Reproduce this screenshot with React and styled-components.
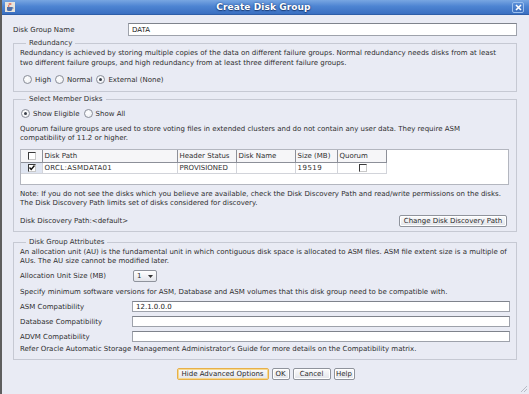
import React from "react";
import styled, { createGlobalStyle } from "styled-components";

const Global = createGlobalStyle`
  html, body { margin: 0; padding: 0; background: #e9ebf4; }
  * { box-sizing: border-box; }
`;

const Window = styled.div`
  width: 529px;
  height: 394px;
  display: flex;
  flex-direction: column;
  background: #e9ebf4;
  border-left: 2px solid #5e5e5e;
  font-family: "DejaVu Sans", sans-serif;
  font-size: 7px;
  color: #2e2e2e;
  position: relative;
  overflow: hidden;
`;

const TitleBar = styled.div`
  height: 15px;
  flex: none;
  display: flex;
  align-items: center;
  padding: 0 5px 0 3px;
  background: linear-gradient(#78a6e2, #4d84d2 45%, #3a6fc1);
  border-bottom: 1px solid #2e5ea8;
`;

const TitleText = styled.div`
  flex: 1;
  text-align: center;
  color: #fff;
  font-weight: bold;
  font-size: 9px;
  letter-spacing: 0.1px;
  text-shadow: 0 0 2px #1d3f78, 0 1px 1px #1d3f78;
`;

const CloseBox = styled.div`
  width: 12px;
  height: 11px;
  border: 1px solid #9cc0ee;
  border-radius: 2px;
  background: linear-gradient(#5a8fd8, #3c6fbf);
  display: flex;
  align-items: center;
  justify-content: center;
`;

const Body = styled.div`
  flex: 1;
  display: flex;
  flex-direction: column;
  padding: 8px 12px 0 11px;
`;

const FormRow = styled.div`
  display: grid;
  grid-template-columns: ${(p) => p.$label}px 1fr;
  align-items: center;
  height: ${(p) => p.$h || 12}px;
  margin-top: ${(p) => p.$mt || 0}px;
`;

const TextField = styled.div`
  height: 100%;
  background: #fff;
  border: 1px solid #9ea2ab;
  border-top-color: #7f838c;
  display: flex;
  align-items: center;
  padding-left: 3px;
  color: #222;
`;

const Group = styled.fieldset`
  margin: ${(p) => p.$mt}px 0 0 0;
  padding: 1px 6px ${(p) => p.$pb}px 6px;
  border: 1px solid #c6c9d3;
  min-width: 0;
`;

const Legend = styled.legend`
  font-size: 7px;
  line-height: 8px;
  padding: 0 3px;
  margin-left: 6px;
  color: #333;
`;

const Para = styled.div`
  line-height: ${(p) => p.$lh || 9}px;
  margin-top: ${(p) => p.$mt || 0}px;
  white-space: nowrap;
`;

const RadioRow = styled.div`
  display: flex;
  align-items: center;
  height: 11px;
  margin-top: ${(p) => p.$mt}px;
  padding-left: ${(p) => p.$pl}px;
  gap: 4px;
`;

const RadioItem = styled.label`
  display: flex;
  align-items: center;
  gap: 3px;
`;

const RadioCircle = styled.span`
  width: 9px;
  height: 9px;
  border-radius: 50%;
  border: 1px solid #8a8e98;
  background: radial-gradient(circle at 40% 40%, #ffffff, #e9ebf0);
  display: flex;
  align-items: center;
  justify-content: center;
  &::after {
    content: "";
    width: 3px;
    height: 3px;
    border-radius: 50%;
    background: ${(p) => (p.$on ? "#3a3f4a" : "transparent")};
  }
`;

const TableArea = styled.div`
  margin-top: ${(p) => p.$mt}px;
  width: 489px;
  height: 36px;
  background: #fff;
  border: 1px solid #b3b6bf;
`;

const Table = styled.table`
  border-collapse: collapse;
  table-layout: fixed;
  width: 365px;
  font-size: 7px;
`;

const Th = styled.th`
  height: 12px;
  padding: 0 0 0 2px;
  font-weight: normal;
  text-align: ${(p) => p.$align || "left"};
  background: #f6f6f8;
  border: 1px solid #8d9099;
  border-top: none;
  white-space: nowrap;
  overflow: hidden;
  &:first-child { border-left: none; }
`;

const Td = styled.td`
  height: 11px;
  padding: 0 0 0 2px;
  text-align: ${(p) => p.$align || "left"};
  background: ${(p) => (p.$sel ? "#dfe5f1" : "#fff")};
  border: 1px solid #d2d4da;
  border-top: none;
  white-space: nowrap;
  letter-spacing: ${(p) => (p.$ls ? p.$ls : 0)}px;
  &:first-child { border-left: none; }
`;

const Check = styled.span`
  display: inline-block;
  vertical-align: middle;
  width: 8px;
  height: 8px;
  background: #fff;
  border-top: 1px solid #3a3a3a;
  border-left: 1px solid #3a3a3a;
  border-right: 1px solid #c8c8c8;
  border-bottom: 1px solid #c8c8c8;
  position: relative;
`;

const CheckMark = styled.svg`
  position: absolute;
  left: 0;
  top: 0;
`;

const SplitRow = styled.div`
  display: flex;
  align-items: center;
  justify-content: space-between;
  height: 12px;
  margin-top: ${(p) => p.$mt}px;
  padding-right: 3px;
`;

const Button = styled.button`
  font-family: "DejaVu Sans", sans-serif;
  font-size: 7px;
  color: #2a2a2a;
  height: ${(p) => p.$h || 12}px;
  width: ${(p) => p.$w}px;
  padding: 0;
  border-radius: 2px;
  border: 1px solid ${(p) => (p.$focus ? "#e7b04a" : "#8f939c")};
  box-shadow: ${(p) =>
    p.$focus ? "inset 0 0 0 1px #f7d98e" : "inset 0 0 0 1px #ffffff"};
  background: linear-gradient(#fbfbfc, #e2e4ea);
  white-space: nowrap;
`;

const SelectBox = styled.div`
  width: 24px;
  height: 12px;
  border: 1px solid #8f939c;
  border-radius: 2px;
  background: linear-gradient(#ffffff, #e3e5eb);
  display: flex;
  align-items: center;
  justify-content: space-between;
  padding: 0 3px 0 3px;
`;

const ButtonBar = styled.div`
  display: flex;
  justify-content: center;
  gap: 3px;
  margin-top: 8px;
  padding-left: 1px;
`;

const Grip = styled.svg`
  position: absolute;
  right: 1px;
  bottom: 1px;
`;

function Radio({ on, children }) {
  return (
    <RadioItem>
      <RadioCircle $on={on} />
      <span>{children}</span>
    </RadioItem>
  );
}

function CheckBox({ on }) {
  return (
    <Check>
      {on && (
        <CheckMark width="6" height="6" viewBox="0 0 6 6">
          <path d="M0.5 2.5 L2.2 4.5 L5.5 0.5" stroke="#111" strokeWidth="1.4" fill="none" />
        </CheckMark>
      )}
    </Check>
  );
}

export default function App() {
  return (
    <>
      <Global />
      <Window>
        <TitleBar>
          <svg width="10" height="10" viewBox="0 0 10 10">
            <rect x="0" y="0" width="10" height="10" fill="#e8e4dc" />
            <path d="M2 5 h5 v2.5 a1.5 1.5 0 0 1 -1.5 1.5 h-2 a1.5 1.5 0 0 1 -1.5 -1.5z" fill="#4f6fa8" />
            <path d="M7 5.5 h1 v1.3 h-1" stroke="#4f6fa8" strokeWidth="0.7" fill="none" />
            <path d="M4 1 q1 1 0 2 q-1 1 0 2 M5.5 1 q1 1 0 2" stroke="#e0402a" strokeWidth="0.8" fill="none" />
          </svg>
          <TitleText>Create Disk Group</TitleText>
          <CloseBox>
            <svg width="7" height="7" viewBox="0 0 7 7">
              <path d="M1 1 L6 6 M6 1 L1 6" stroke="#fff" strokeWidth="1.6" />
            </svg>
          </CloseBox>
        </TitleBar>
        <Body>
          <FormRow $label={115} $h={13}>
            <span>Disk Group Name</span>
            <TextField>DATA</TextField>
          </FormRow>

          <Group $mt={3} $pb={6}>
            <Legend>Redundancy</Legend>
            <Para $lh={10}>
              Redundancy is achieved by storing multiple copies of the data on different failure groups. Normal redundancy needs disks from at least
              <br />
              two different failure groups, and high redundancy from at least three different failure groups.
            </Para>
            <RadioRow $mt={6} $pl={3}>
              <Radio>High</Radio>
              <Radio>Normal</Radio>
              <Radio on>External (None)</Radio>
            </RadioRow>
          </Group>

          <Group $mt={3} $pb={4}>
            <Legend>Select Member Disks</Legend>
            <RadioRow $mt={4} $pl={1}>
              <Radio on>Show Eligible</Radio>
              <Radio>Show All</Radio>
            </RadioRow>
            <Para $mt={6}>
              Quorum failure groups are used to store voting files in extended clusters and do not contain any user data. They require ASM
              <br />
              compatibility of 11.2 or higher.
            </Para>
            <TableArea $mt={6}>
              <Table>
                <colgroup>
                  <col style={{ width: 21 }} />
                  <col style={{ width: 135 }} />
                  <col style={{ width: 59 }} />
                  <col style={{ width: 59 }} />
                  <col style={{ width: 42 }} />
                  <col style={{ width: 49 }} />
                </colgroup>
                <thead>
                  <tr>
                    <Th $align="center"><CheckBox /></Th>
                    <Th>Disk Path</Th>
                    <Th>Header Status</Th>
                    <Th>Disk Name</Th>
                    <Th>Size (MB)</Th>
                    <Th>Quorum</Th>
                  </tr>
                </thead>
                <tbody>
                  <tr>
                    <Td $align="center" $sel><CheckBox on /></Td>
                    <Td $ls={0.3}>ORCL:ASMDATA01</Td>
                    <Td>PROVISIONED</Td>
                    <Td />
                    <Td $ls={0.5}>19519</Td>
                    <Td $align="center"><CheckBox /></Td>
                  </tr>
                </tbody>
              </Table>
            </TableArea>
            <Para $mt={5}>
              Note: If you do not see the disks which you believe are available, check the Disk Discovery Path and read/write permissions on the disks.
              <br />
              The Disk Discovery Path limits set of disks considered for discovery.
            </Para>
            <SplitRow $mt={7}>
              <span>Disk Discovery Path:&lt;default&gt;</span>
              <Button $w={108}>Change Disk Discovery Path</Button>
            </SplitRow>
          </Group>

          <Group $mt={6} $pb={5}>
            <Legend>Disk Group Attributes</Legend>
            <Para $mt={1}>
              An allocation unit (AU) is the fundamental unit in which contiguous disk space is allocated to ASM files. ASM file extent size is a multiple of
              <br />
              AUs. The AU size cannot be modified later.
            </Para>
            <FormRow $label={113} $h={12} $mt={4}>
              <span>Allocation Unit Size (MB)</span>
              <SelectBox>
                <span>1</span>
                <svg width="5" height="3" viewBox="0 0 5 3">
                  <path d="M0 0 H5 L2.5 3z" fill="#333" />
                </svg>
              </SelectBox>
            </FormRow>
            <Para $mt={6}>
              Specify minimum software versions for ASM, Database and ASM volumes that this disk group need to be compatible with.
            </Para>
            <FormRow $label={112} $h={11} $mt={4}>
              <span>ASM Compatibility</span>
              <TextField>12.1.0.0.0</TextField>
            </FormRow>
            <FormRow $label={112} $h={11} $mt={4}>
              <span>Database Compatibility</span>
              <TextField />
            </FormRow>
            <FormRow $label={112} $h={11} $mt={4}>
              <span>ADVM Compatibility</span>
              <TextField />
            </FormRow>
            <Para $mt={3}>
              Refer Oracle Automatic Storage Management Administrator's Guide for more details on the Compatibility matrix.
            </Para>
          </Group>

          <ButtonBar>
            <Button $w={92} $focus>Hide Advanced Options</Button>
            <Button $w={18}>OK</Button>
            <Button $w={38}>Cancel</Button>
            <Button $w={21}>Help</Button>
          </ButtonBar>
        </Body>
        <Grip width="8" height="8" viewBox="0 0 8 8">
          <path d="M7 1 L1 7 M7 4 L4 7" stroke="#b8bcc6" strokeWidth="1" />
        </Grip>
      </Window>
    </>
  );
}
